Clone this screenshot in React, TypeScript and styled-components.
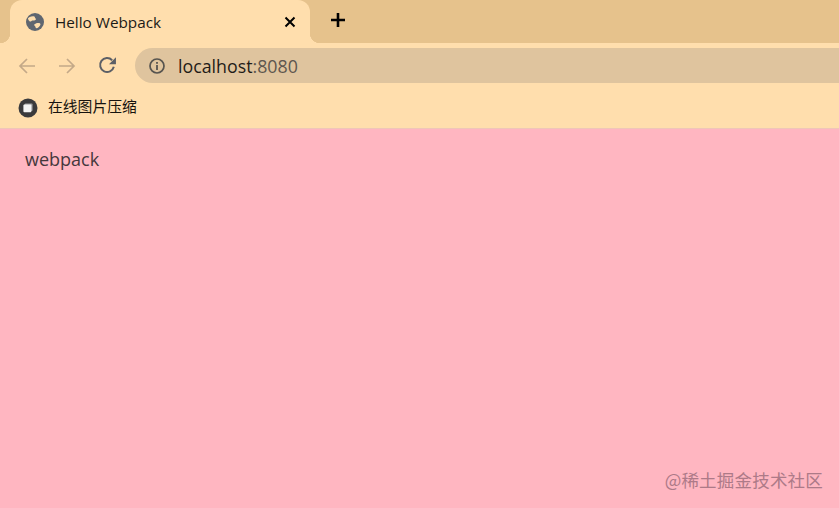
import React from 'react'
import styled, { createGlobalStyle } from 'styled-components'

const GlobalStyle = createGlobalStyle`
  html, body {
    margin: 0;
    padding: 0;
    height: 100%;
    overflow: hidden;
  }
  #root {
    height: 100%;
  }
`

const FONT = `'Noto Sans', 'Liberation Sans', 'Noto Sans CJK SC', sans-serif`

const GlobeIcon = () => (
  <svg width="20" height="20" viewBox="0 0 20 20">
    <circle cx="10" cy="10" r="9" fill="#5f6670" />
    <path d="M4.2 5.2c1.8-.6 3.6-1.2 5.2-.6.8.4.4 1.4 1.2 2 .7.6.2 1.5-.7 1.7-1.4.4-2.4-.2-3.4.6-.6.5-1 .9-1.7.6-.9-.6-1.6-1.7-1.9-2.9z" fill="#ffdead" />
    <path d="M9.2 12.6c1.3-1.5 3-1.9 4.9-1.6 1.1.2 1.7 1 1.2 2-.7 1.4-2 2.6-3.4 3.2-1 .2-1.4-.6-1.5-1.4-.1-.9-1.5-1-1.2-2.2z" fill="#ffdead" />
  </svg>
)

const CloseIcon = () => (
  <svg width="12" height="12" viewBox="0 0 12 12">
    <path d="M1.5 1.5l9 9M10.5 1.5l-9 9" stroke="#000" strokeWidth="2" fill="none" />
  </svg>
)

const PlusIcon = () => (
  <svg width="16" height="16" viewBox="0 0 16 16">
    <path d="M8 1v14M1 8h14" stroke="#000" strokeWidth="2.6" fill="none" />
  </svg>
)

const ArrowIcon = ({ flip }: { flip?: boolean }) => (
  <svg width="18" height="16" viewBox="0 0 18 16" style={flip ? { transform: 'scaleX(-1)' } : undefined}>
    <path d="M17 8H2M9 1L2 8l7 7" stroke="#c4a988" strokeWidth="1.7" fill="none" />
  </svg>
)

const ReloadIcon = () => (
  <svg width="19" height="19" viewBox="0 0 18 18">
    <path d="M15 10.2A6.6 6.6 0 1 1 13.4 4" stroke="#5c5f66" strokeWidth="1.9" fill="none" />
    <path d="M17 1.2v6.6h-6.6z" fill="#5c5f66" />
  </svg>
)

const InfoIcon = () => (
  <svg width="16" height="16" viewBox="0 0 16 16">
    <circle cx="8" cy="8" r="7" stroke="#57544f" strokeWidth="1.7" fill="none" />
    <rect x="7.1" y="7" width="1.8" height="5" fill="#57544f" />
    <rect x="7.1" y="4" width="1.8" height="1.8" fill="#57544f" />
  </svg>
)

const BookmarkIcon = () => (
  <svg width="20" height="20" viewBox="0 0 20 20">
    <circle cx="10" cy="10" r="9.5" fill="#3a3a3c" />
    <rect x="6.6" y="5.6" width="8" height="7.4" rx="1" fill="#9a9a9c" />
    <rect x="5.4" y="6.6" width="8" height="7.6" rx="1" fill="#f4f4f4" />
  </svg>
)

const Page = styled.div`
  display: flex;
  flex-direction: column;
  height: 100%;
  background: #ffb6c1;
  font-family: ${FONT};
  position: relative;
`

const TabStrip = styled.div`
  display: flex;
  align-items: flex-end;
  height: 43px;
  padding-left: 10px;
  background: #e6c28c;
`

const Tab = styled.div`
  position: relative;
  display: flex;
  align-items: center;
  width: 300px;
  height: 43px;
  box-sizing: border-box;
  padding: 0 14px 0 15px;
  background: #ffdead;
  border-radius: 12px 12px 0 0;

  &::before,
  &::after {
    content: '';
    position: absolute;
    bottom: 0;
    width: 10px;
    height: 10px;
  }
  &::before {
    left: -10px;
    background: radial-gradient(circle at 0 0, transparent 10px, #ffdead 10.5px);
  }
  &::after {
    right: -10px;
    background: radial-gradient(circle at 100% 0, transparent 10px, #ffdead 10.5px);
  }
`

const TabTitle = styled.span`
  flex: 1;
  margin-left: 10px;
  font-family: 'Open Sans', 'Liberation Sans', sans-serif;
  font-size: 15.3px;
  line-height: 20px;
  color: #1b1a17;
`

const NewTab = styled.div`
  display: flex;
  align-items: center;
  margin: 0 0 4px 20px;
  height: 39px;
`

const Toolbar = styled.div`
  display: flex;
  align-items: center;
  height: 45px;
  padding-left: 18px;
  background: #ffdead;
`

const NavButton = styled.div<{ $gap: number }>`
  display: flex;
  align-items: center;
  margin-right: ${(props) => props.$gap}px;
`

const AddressBar = styled.div`
  flex: 1;
  display: flex;
  align-items: center;
  height: 35px;
  padding-left: 14px;
  border-radius: 18px 0 0 18px;
  background: #dfc49e;
`

const Url = styled.span`
  margin-left: 13px;
  font-family: 'Open Sans', 'Liberation Sans', sans-serif;
  font-size: 17.8px;
  color: #1f1c18;
`

const UrlPort = styled.span`
  color: #5e574e;
`

const Bookmarks = styled.div`
  display: flex;
  align-items: center;
  height: 40px;
  padding-left: 18px;
  background: #ffdead;
  border-bottom: 1px solid #efc6b8;
`

const BookmarkLabel = styled.span`
  margin: -5px 0 0 10px;
  font-family: 'Noto Sans CJK SC', sans-serif;
  font-size: 14.8px;
  line-height: 20px;
  color: #16130f;
`

const Content = styled.main`
  flex: 1;
  padding: 18px 25px;
  font-family: 'Open Sans', 'Liberation Sans', sans-serif;
  font-size: 18px;
  line-height: 24px;
  color: #45383c;
`

const Watermark = styled.div`
  position: absolute;
  right: 16px;
  bottom: 18px;
  font-family: 'Noto Sans CJK SC', sans-serif;
  font-size: 17.5px;
  line-height: 20px;
  letter-spacing: 0.2px;
  color: #ad7a88;
`

export default function App() {
  return (
    <>
      <GlobalStyle />
      <Page>
        <TabStrip>
          <Tab>
            <GlobeIcon />
            <TabTitle>Hello Webpack</TabTitle>
            <CloseIcon />
          </Tab>
          <NewTab>
            <PlusIcon />
          </NewTab>
        </TabStrip>
        <Toolbar>
          <NavButton $gap={22}>
            <ArrowIcon />
          </NavButton>
          <NavButton $gap={22}>
            <ArrowIcon flip />
          </NavButton>
          <NavButton $gap={18}>
            <ReloadIcon />
          </NavButton>
          <AddressBar>
            <InfoIcon />
            <Url>
              localhost<UrlPort>:8080</UrlPort>
            </Url>
          </AddressBar>
        </Toolbar>
        <Bookmarks>
          <BookmarkIcon />
          <BookmarkLabel>在线图片压缩</BookmarkLabel>
        </Bookmarks>
        <Content>webpack</Content>
        <Watermark>@稀土掘金技术社区</Watermark>
      </Page>
    </>
  )
}
